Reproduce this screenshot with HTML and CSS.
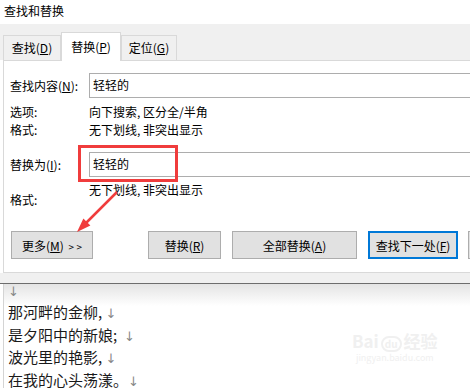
FILE: index.html
```html
<!DOCTYPE html>
<html lang="zh-CN">
<head>
  <meta charset="UTF-8" />
  <title>查找和替换</title>
  <link rel="stylesheet" href="styles.css">
</head>
<body>
  <div class="screen">
    <div class="dialog">
      <div class="titlebar">查找和替换</div>

      <div class="tabbar">
        <div class="tab">查找(<u>D</u>)</div>
        <div class="tab active">替换(<u>P</u>)</div>
        <div class="tab">定位(<u>G</u>)</div>
      </div>

      <div class="panel">
        <div class="row find-row">
          <div class="label">查找内容(<u>N</u>):</div>
          <div class="field">轻轻的</div>
        </div>
        <div class="row info-row">
          <div class="label">选项:</div>
          <div class="value">向下搜索, 区分全/半角</div>
        </div>
        <div class="row info-row">
          <div class="label">格式:</div>
          <div class="value">无下划线, 非突出显示</div>
        </div>
        <div class="row replace-row">
          <div class="label">替换为(<u>I</u>):</div>
          <div class="field">轻轻的</div>
        </div>
        <div class="row format-row">
          <div class="label">格式:</div>
          <div class="value">无下划线, 非突出显示</div>
        </div>

        <div class="buttons">
          <button class="btn more">更多(<u>M</u>) <span class="chev">&gt; &gt;</span></button>
          <button class="btn replace">替换(<u>R</u>)</button>
          <button class="btn replace-all">全部替换(<u>A</u>)</button>
          <button class="btn find-next">查找下一处(<u>F</u>)</button>
          <button class="btn cancel"></button>
        </div>

        <div class="highlight"></div>
        <svg class="arrow" width="50" height="48" viewBox="0 0 50 48">
          <line x1="43" y1="2" x2="11" y2="34" stroke="#f03c3c" stroke-width="2.5" />
          <polygon points="3,42 16.4,35.6 9.4,28.6" fill="#f03c3c" />
        </svg>
      </div>
      <div class="dialog-foot"></div>
    </div>

    <div class="document">
      <div class="line"><span class="mark">↓</span></div>
      <div class="line">那河畔的金柳, <span class="mark">↓</span></div>
      <div class="line">是夕阳中的新娘; &nbsp;<span class="mark">↓</span></div>
      <div class="line">波光里的艳影, <span class="mark">↓</span></div>
      <div class="line">在我的心头荡漾。<span class="mark">↓</span></div>

      <div class="watermark">
        <div class="wm-logo">Bai<span class="wm-du">du</span>经验</div>
        <div class="wm-url">jingyan.baidu.com</div>
      </div>
    </div>
  </div>
</body>
</html>
```

FILE: styles.css
```css
body {
  margin: 0;
  background: white;
  font-family: "Noto Sans CJK SC", "Liberation Sans", sans-serif;
  color: #000;
}

.screen {
  width: 470px;
  height: 388px;
  overflow: hidden;
  position: relative;
}

.dialog {
  background: white;
}

.titlebar {
  height: 24px;
  line-height: 22px;
  padding-left: 4px;
  font-size: 12px;
}

.tabbar {
  height: 36px;
  background: #f0f0f0;
  display: flex;
  align-items: flex-end;
  padding-left: 3px;
}

.tab {
  height: 24px;
  line-height: 23px;
  font-size: 12px;
  border: 1px solid #d9d9d9;
  border-bottom: none;
  background: #f0f0f0;
  text-align: center;
}

.tab:nth-child(1) {
  width: 56px;
}

.tab:nth-child(3) {
  width: 54px;
}

.tab.active {
  width: 58px;
  height: 28px;
  line-height: 27px;
  background: white;
  margin-bottom: -1px;
  position: relative;
  z-index: 1;
}

u {
  text-decoration: underline;
  text-underline-offset: 1px;
}

.panel {
  position: relative;
  margin-left: 3px;
  border-left: 1px solid #d9d9d9;
  border-top: 1px solid #d9d9d9;
  border-bottom: 1px solid #d9d9d9;
  height: 199px;
  padding: 12px 0 0 6px;
  font-size: 12px;
}

.row {
  display: grid;
  grid-template-columns: 79px 1fr;
  align-items: center;
}

.field {
  height: 23px;
  line-height: 22px;
  border: 1px solid #adadad;
  border-right: none;
  padding-left: 3px;
  font-size: 12px;
}

.info-row {
  height: 18px;
  line-height: 18px;
}

.find-row + .info-row {
  margin-top: 5px;
}

.replace-row {
  margin-top: 13px;
}

.format-row {
  align-items: start;
  height: 26px;
  margin-top: 4px;
}

.format-row .label {
  padding-top: 10px;
}

.buttons {
  display: flex;
  margin-top: 24px;
  margin-left: 1px;
}

.btn {
  flex-shrink: 0;
  height: 28px;
  border: 1px solid #adadad;
  background: #e1e1e1;
  font-family: inherit;
  font-size: 12px;
  color: #000;
  padding: 0;
  white-space: nowrap;
}

.chev {
  font-size: 10px;
  margin-left: 2px;
}

.more {
  width: 82px;
}

.replace {
  width: 73px;
  margin-left: 55px;
}

.replace-all {
  width: 125px;
  margin-left: 11px;
}

.find-next {
  width: 90px;
  margin-left: 11px;
  border: 2px solid #0078d7;
}

.cancel {
  width: 60px;
  margin-left: 10px;
}

.highlight {
  position: absolute;
  left: 74px;
  top: 84px;
  width: 94px;
  height: 31px;
  border: 3px solid #f03c3c;
}

.arrow {
  position: absolute;
  left: 70px;
  top: 129px;
}

.dialog-foot {
  height: 10px;
  background: #f0f0f0;
  border-bottom: 1px solid #6d6d6d;
}

.document {
  position: relative;
  margin-left: 3px;
  border-left: 1px solid #d4d4d4;
  padding-left: 4px;
  height: 110px;
  background: linear-gradient(#e4e4e4, #fff 22px);
  font-size: 15px;
  color: #1a1a1a;
}

.line {
  height: 22.5px;
  line-height: 22px;
}

.line:first-child {
  height: 17px;
  line-height: 12px;
}

.mark {
  color: #888;
  font-size: 13px;
  font-family: "DejaVu Sans", sans-serif;
}

.watermark {
  position: absolute;
  left: 348px;
  top: 46px;
  color: #f0f0f0;
  text-align: center;
}

.wm-logo {
  font-size: 17px;
  font-weight: bold;
  line-height: 22px;
}

.wm-du {
  display: inline-block;
  font-size: 10px;
  border: 2px solid #f0f0f0;
  border-radius: 8px;
  padding: 0 2px;
  margin: 0 2px;
  line-height: 12px;
}

.wm-url {
  font-size: 9px;
  line-height: 12px;
}
```
